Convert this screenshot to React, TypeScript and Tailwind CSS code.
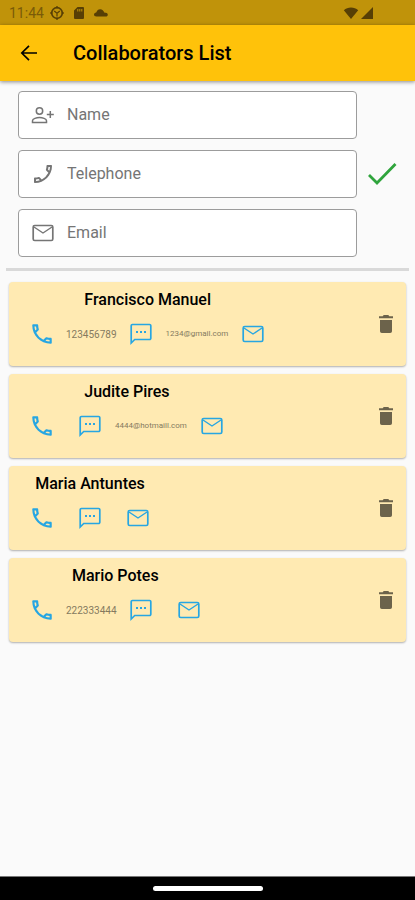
import { useState, type FormEvent, type ReactNode } from "react";
import { MdOutlineCall } from "react-icons/md";

type Collaborator = { name: string; phone: string; email: string };

const initialCollaborators: Collaborator[] = [
  { name: "Francisco Manuel", phone: "123456789", email: "1234@gmail.com" },
  { name: "Judite Pires", phone: "", email: "4444@hotmaill.com" },
  { name: "Maria Antuntes", phone: "", email: "" },
  { name: "Mario Potes", phone: "222333444", email: "" },
];

function PersonAddIcon() {
  return (
    <svg viewBox="0 0 24 24" className="size-6" fill="none" stroke="currentColor" strokeWidth="1.5" aria-hidden="true">
      <circle cx="8.500" cy="8" r="3.200" />
      <path d="M1.500 19.500v-1.700c0-2.200 4.200-3.300 7-3.300s7 1.100 7 3.300v1.700z" />
      <path d="M19.300 8v7M15.800 11.500h7" />
    </svg>
  );
}

function MailIcon() {
  return (
    <svg viewBox="0 0 24 24" className="size-6" fill="none" stroke="currentColor" strokeWidth="1.700" aria-hidden="true">
      <rect x="2.200" y="4.500" width="19.600" height="15" rx="1.500" />
      <path d="M3 6l9 6 9-6" strokeWidth="1.400" />
    </svg>
  );
}

function MessageIcon() {
  return (
    <svg viewBox="0 0 24 24" className="size-6" fill="none" stroke="currentColor" strokeWidth="1.700" aria-hidden="true">
      <path d="M2.200 21V3.700a1.200 1.200 0 0 1 1.200-1.200h17.200a1.200 1.200 0 0 1 1.200 1.200v12.600a1.200 1.200 0 0 1-1.200 1.200H5.700z" />
      <path d="M7 10h2M11 10h2M15 10h2" strokeWidth="2" />
    </svg>
  );
}

function TrashIcon() {
  return (
    <svg viewBox="0 0 24 24" className="size-6" fill="currentColor" aria-hidden="true">
      <path d="M6 8h12v11.200a1.800 1.800 0 0 1-1.800 1.800H7.800A1.800 1.800 0 0 1 6 19.200z" />
      <path d="M5 4.200h3.700l1-1.200h4.600l1 1.200H19v2H5z" />
    </svg>
  );
}

function StatusBar() {
  return (
    <div className="flex h-[25px] items-center justify-between bg-[#c0930a] pl-[9px] pr-[42px] text-[#573f05]">
      <div className="flex items-center">
        <span className="w-10 text-sm text-[#7a5b08]">11:44</span>
        <svg viewBox="0 0 16 16" className="size-4" fill="none" stroke="currentColor" aria-hidden="true">
          <circle cx="8" cy="8" r="5.300" strokeWidth="1.700" />
          <path d="M5.200 6l2.800 2.200L10.800 6M8 8.200v3.200" strokeWidth="1.200" />
          <path d="M8 1.200v2M8 12.800v2M1.200 8h2M12.800 8h2" strokeWidth="1.700" />
        </svg>
        <svg viewBox="0 0 12 14" className="ml-2 h-3.5 w-3" fill="currentColor" aria-hidden="true">
          <path
            fillRule="evenodd"
            d="M4.500 1H10a1 1 0 0 1 1 1v10a1 1 0 0 1-1 1H2a1 1 0 0 1-1-1V4.500zM4.300 3v2.500h1V3zM6.300 3v2.500h1V3zM8.300 3v2.500h1V3z"
          />
        </svg>
        <svg viewBox="0 0 16 14" className="ml-2 h-3.5 w-4" fill="currentColor" aria-hidden="true">
          <path d="M3.500 10.500C1.800 10.500 1 9.500 1 8.500s1-1.900 2.200-2C4 4.400 5.300 3.200 7.200 3.200c2 0 3.500 1.300 4 3.200 2.200 0 3.600.9 3.600 2.300 0 1.100-.8 1.800-2 1.800z" />
        </svg>
      </div>
      <div className="flex items-center gap-0.5">
        <svg viewBox="0 0 16 14" className="h-3.5 w-4" fill="currentColor" aria-hidden="true">
          <path d="M8 13L.8 4.200C2.800 2.400 5.300 1.500 8 1.500s5.200.9 7.200 2.700z" />
        </svg>
        <svg viewBox="0 0 12 12" className="size-3" fill="currentColor" aria-hidden="true">
          <path d="M0 12L12 0v12z" />
        </svg>
      </div>
    </div>
  );
}

type FieldProps = {
  id: string;
  label: string;
  type: string;
  icon: ReactNode;
  value: string;
  onChange: (value: string) => void;
};

function Field({ id, label, type, icon, value, onChange }: FieldProps) {
  return (
    <label
      htmlFor={id}
      className="flex h-12 items-center gap-3 rounded border border-[#9c9c9c] bg-white px-3 text-[#757575]"
    >
      <span className="shrink-0">{icon}</span>
      <input
        id={id}
        type={type}
        aria-label={label}
        value={value}
        onChange={(event) => onChange(event.target.value)}
        placeholder={label}
        className="w-full min-w-0 bg-transparent text-base text-black outline-none placeholder:text-[#757575]"
      />
    </label>
  );
}

function ActionButton({ label, children }: { label: string; children: ReactNode }) {
  return (
    <button type="button" aria-label={label} className="flex size-12 items-center justify-center text-[#27a6e2]">
      {children}
    </button>
  );
}

function CollaboratorCard({ person, onDelete }: { person: Collaborator; onDelete: () => void }) {
  return (
    <li className="flex h-[84px] items-center justify-between rounded bg-[#ffeab2] pl-[9px] shadow-[0_1px_2px_rgba(0,0,0,0.3)]">
      <div className="flex h-full flex-col items-center pt-2">
        <h2 className="text-base leading-5 font-medium text-black">{person.name}</h2>
        <div className="flex h-12 items-center text-[#857a5f]">
          <ActionButton label={`Call ${person.name}`}>
            <MdOutlineCall className="size-[26px]" />
          </ActionButton>
          {person.phone && <span className="text-[10px]">{person.phone}</span>}
          <ActionButton label={`Message ${person.name}`}>
            <MessageIcon />
          </ActionButton>
          {person.email && <span className="px-px text-[8px]">{person.email}</span>}
          <ActionButton label={`Email ${person.name}`}>
            <MailIcon />
          </ActionButton>
        </div>
      </div>
      <button
        type="button"
        aria-label={`Delete ${person.name}`}
        onClick={onDelete}
        className="flex w-10 items-center justify-center text-[#6c634b]"
      >
        <TrashIcon />
      </button>
    </li>
  );
}

export default function App() {
  const [people, setPeople] = useState(initialCollaborators);
  const [name, setName] = useState("");
  const [phone, setPhone] = useState("");
  const [email, setEmail] = useState("");

  const addPerson = (event: FormEvent) => {
    event.preventDefault();
    if (!name.trim()) return;
    setPeople([...people, { name, phone, email }]);
    setName("");
    setPhone("");
    setEmail("");
  };

  return (
    <div className="flex min-h-screen flex-col bg-[#fafafa] font-[Roboto,sans-serif]">
      <StatusBar />
      <header className="flex h-14 items-center bg-[#ffc20a] pl-[17px] text-black shadow-[0_1px_4px_rgba(0,0,0,0.45)]">
        <button type="button" aria-label="Back" className="flex w-14 items-center">
          <svg viewBox="0 0 24 24" className="size-6" fill="none" stroke="currentColor" strokeWidth="1.700" aria-hidden="true">
            <path d="M20 12H5M12 4.800L4.800 12l7.200 7.200" />
          </svg>
        </button>
        <h1 className="text-xl font-medium">Collaborators List</h1>
      </header>
      <main className="flex-1">
        <form onSubmit={addPerson} className="flex items-center pt-2.5 pr-2 pb-[11px] pl-[18px]">
          <div className="flex flex-1 flex-col gap-[11px]">
            <Field id="name" label="Name" type="text" icon={<PersonAddIcon />} value={name} onChange={setName} />
            <Field
              id="telephone"
              label="Telephone"
              type="tel"
              icon={<MdOutlineCall className="size-6 -scale-x-100" />}
              value={phone}
              onChange={setPhone}
            />
            <Field id="email" label="Email" type="email" icon={<MailIcon />} value={email} onChange={setEmail} />
          </div>
          <button type="submit" aria-label="Add collaborator" className="flex w-[50px] justify-center text-[#2fa43c]">
            <svg viewBox="0 0 32 32" className="size-8" fill="none" stroke="currentColor" strokeWidth="2.800" aria-hidden="true">
              <path d="M3 17l8 8L29.500 6" />
            </svg>
          </button>
        </form>
        <hr className="mx-1.5 border-t-[3px] border-[#d9d9d9]" />
        <ul className="flex flex-col gap-2 px-[9px] pt-[11px]">
          {people.map((person, index) => (
            <CollaboratorCard
              key={person.name}
              person={person}
              onDelete={() => setPeople(people.filter((_, i) => i !== index))}
            />
          ))}
        </ul>
      </main>
      <div className="flex h-6 items-center justify-center border-t border-[#777777] bg-black">
        <div className="h-[5px] w-[110px] rounded-full bg-white" />
      </div>
    </div>
  );
}
